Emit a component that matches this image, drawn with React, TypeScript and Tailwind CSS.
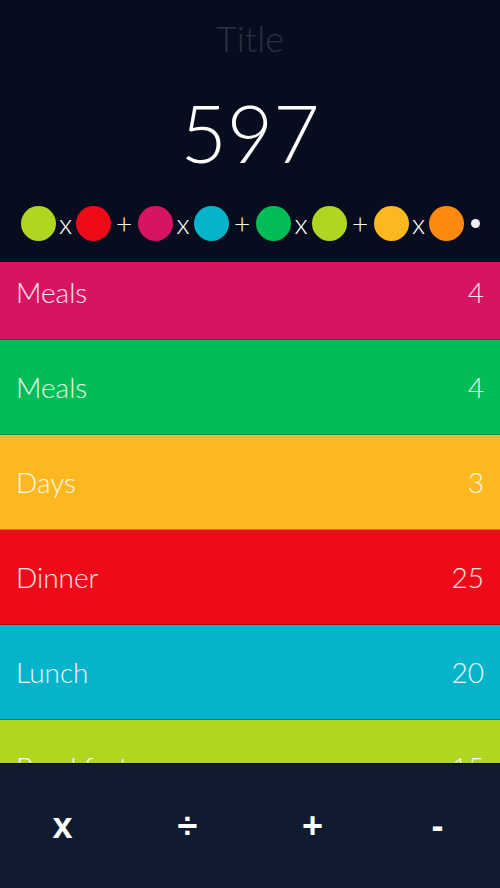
import React from "react";

const rows = [
  { label: "Meals", value: "4", bg: "bg-[#d61462]" },
  { label: "Meals", value: "4", bg: "bg-[#02bc55]" },
  { label: "Days", value: "3", bg: "bg-[#fdb71f]" },
  { label: "Dinner", value: "25", bg: "bg-[#ef0a1a]" },
  { label: "Lunch", value: "20", bg: "bg-[#05b3cb]" },
  { label: "Breakfast", value: "15", bg: "bg-[#b0d622]" },
];

function Dot({ c }: { c: string }) {
  return <div className={`w-[35px] h-[35px] rounded-full shrink-0 ${c}`} />;
}

function Op({ s, w }: { s: string; w: string }) {
  return (
    <div className={`${w} shrink-0 flex items-center justify-center text-white text-[28px] font-light leading-none pb-[2px]`}>
      {s}
    </div>
  );
}

export default function App() {
  return (
    <div
      className="w-[500px] h-[888px] flex flex-col overflow-hidden bg-[#070d1e]"
      style={{ fontFamily: "Lato, 'Open Sans', sans-serif" }}
    >
      <div className="h-[262px] shrink-0 flex flex-col items-center">
        <div className="h-[76px] flex items-center justify-center text-[36px] font-light text-[#2a3142] leading-none">
          Title
        </div>
        <div className="h-[112px] flex items-center justify-center text-[80px] font-light text-white leading-none">
          597
        </div>
        <div className="mt-[18px] h-[35px] flex items-center justify-center w-full">
          <Dot c="bg-[#b0d622]" />
          <Op s="x" w="w-[20px]" />
          <Dot c="bg-[#ef0a1a]" />
          <Op s="+" w="w-[27px]" />
          <Dot c="bg-[#d61462]" />
          <Op s="x" w="w-[21px]" />
          <Dot c="bg-[#05b3cb]" />
          <Op s="+" w="w-[27px]" />
          <Dot c="bg-[#02bc55]" />
          <Op s="x" w="w-[21px]" />
          <Dot c="bg-[#b0d622]" />
          <Op s="+" w="w-[27px]" />
          <Dot c="bg-[#fdb71f]" />
          <Op s="x" w="w-[20px]" />
          <Dot c="bg-[#fd8a0e]" />
          <div className="ml-[7px] w-[9px] h-[9px] rounded-full bg-[#eef0f2] shrink-0" />
        </div>
      </div>

      <div className="flex-1 overflow-hidden">
        <div className="-mt-[17px]">
          {rows.map((r, i) => (
            <div
              key={i}
              className={`h-[95px] border-b border-black/25 ${r.bg} flex items-center justify-between px-4 text-[28px] font-light text-white/90 leading-none`}
            >
              <span>{r.label}</span>
              <span>{r.value}</span>
            </div>
          ))}
        </div>
      </div>

      <div
        className="h-[125px] shrink-0 bg-[#111b2f] border-t border-black grid grid-cols-4 items-center text-white font-bold text-[36px] leading-none"
        style={{ fontFamily: "'Liberation Sans', Arial, sans-serif" }}
      >
        <div className="flex justify-center">x</div>
        <div className="flex justify-center">÷</div>
        <div className="flex justify-center">+</div>
        <div className="flex justify-center">-</div>
      </div>
    </div>
  );
}
